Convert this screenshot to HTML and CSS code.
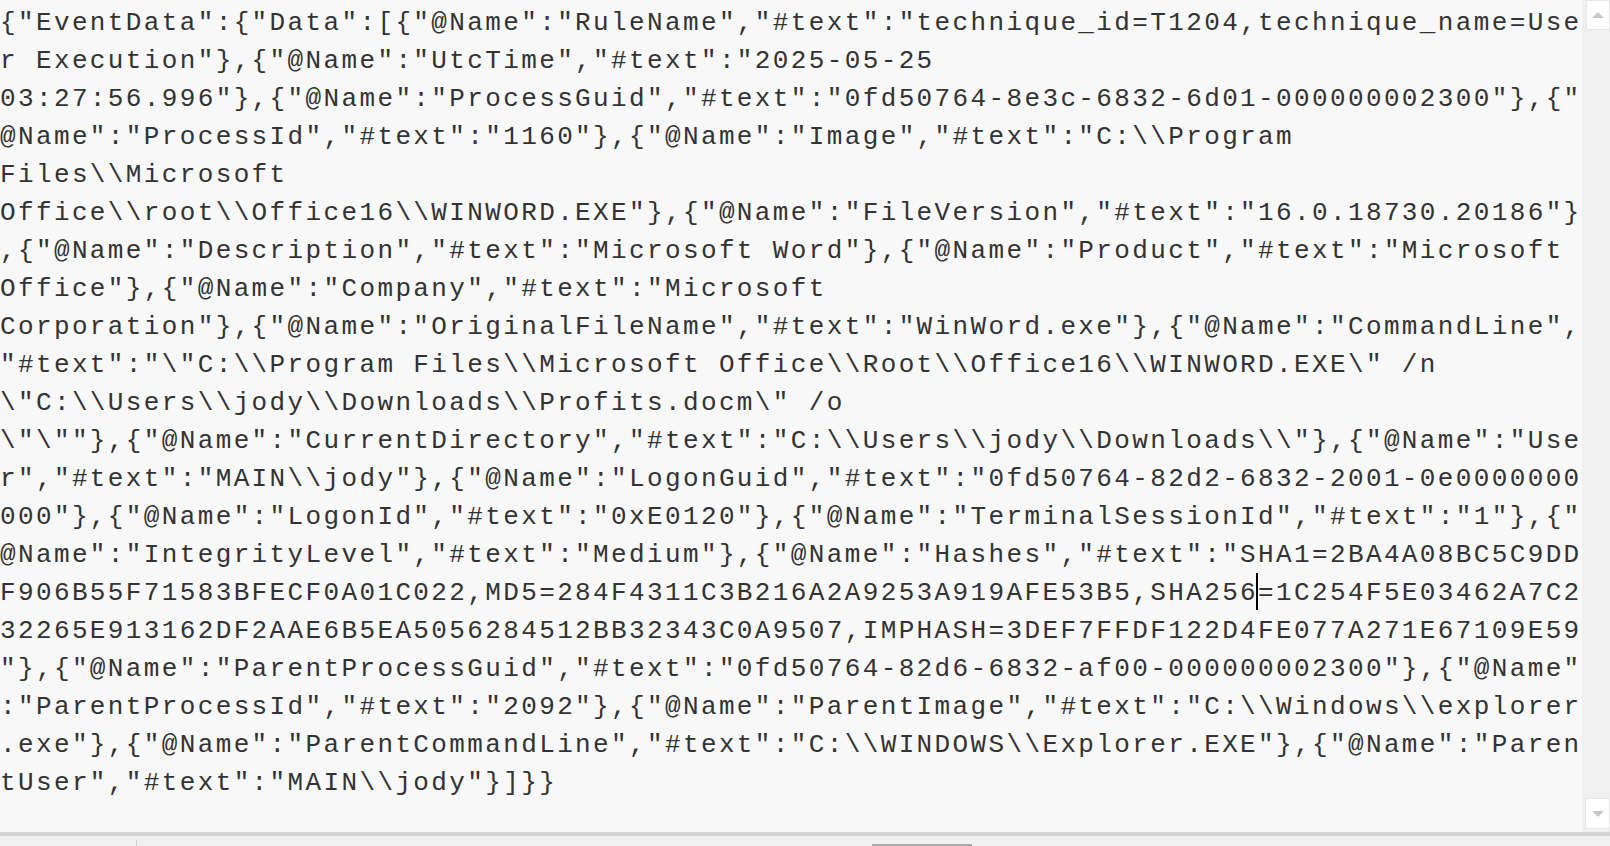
FILE: index.html
```
<!DOCTYPE html>
<html>
<head>
<meta charset="utf-8">
<link rel="stylesheet" href="styles.css">
</head>
<body>
<div class="window">
  <div class="main">
    <div class="editor">
      <div class="line">{"EventData":{"Data":[{"@Name":"RuleName","#text":"technique_id=T1204,technique_name=Use</div>
      <div class="line">r Execution"},{"@Name":"UtcTime","#text":"2025-05-25</div>
      <div class="line">03:27:56.996"},{"@Name":"ProcessGuid","#text":"0fd50764-8e3c-6832-6d01-000000002300"},{"</div>
      <div class="line">@Name":"ProcessId","#text":"1160"},{"@Name":"Image","#text":"C:\\Program</div>
      <div class="line">Files\\Microsoft</div>
      <div class="line">Office\\root\\Office16\\WINWORD.EXE"},{"@Name":"FileVersion","#text":"16.0.18730.20186"}</div>
      <div class="line">,{"@Name":"Description","#text":"Microsoft Word"},{"@Name":"Product","#text":"Microsoft</div>
      <div class="line">Office"},{"@Name":"Company","#text":"Microsoft</div>
      <div class="line">Corporation"},{"@Name":"OriginalFileName","#text":"WinWord.exe"},{"@Name":"CommandLine",</div>
      <div class="line">"#text":"\"C:\\Program Files\\Microsoft Office\\Root\\Office16\\WINWORD.EXE\" /n</div>
      <div class="line">\"C:\\Users\\jody\\Downloads\\Profits.docm\" /o</div>
      <div class="line">\"\""},{"@Name":"CurrentDirectory","#text":"C:\\Users\\jody\\Downloads\\"},{"@Name":"Use</div>
      <div class="line">r","#text":"MAIN\\jody"},{"@Name":"LogonGuid","#text":"0fd50764-82d2-6832-2001-0e0000000</div>
      <div class="line">000"},{"@Name":"LogonId","#text":"0xE0120"},{"@Name":"TerminalSessionId","#text":"1"},{"</div>
      <div class="line">@Name":"IntegrityLevel","#text":"Medium"},{"@Name":"Hashes","#text":"SHA1=2BA4A08BC5C9DD</div>
      <div class="line">F906B55F71583BFECF0A01C022,MD5=284F4311C3B216A2A9253A919AFE53B5,SHA256<span class="caret"></span>=1C254F5E03462A7C2</div>
      <div class="line">32265E913162DF2AAE6B5EA5056284512BB32343C0A9507,IMPHASH=3DEF7FFDF122D4FE077A271E67109E59</div>
      <div class="line">"},{"@Name":"ParentProcessGuid","#text":"0fd50764-82d6-6832-af00-000000002300"},{"@Name"</div>
      <div class="line">:"ParentProcessId","#text":"2092"},{"@Name":"ParentImage","#text":"C:\\Windows\\explorer</div>
      <div class="line">.exe"},{"@Name":"ParentCommandLine","#text":"C:\\WINDOWS\\Explorer.EXE"},{"@Name":"Paren</div>
      <div class="line">tUser","#text":"MAIN\\jody"}]}}</div>
    </div>
    <div class="vscroll">
      <div class="sbtn"><span class="arrow up"></span></div>
      <div class="track"></div>
      <div class="sbtn"><span class="arrow down"></span></div>
    </div>
  </div>
  <div class="hsep"></div>
  <div class="status">
    <div class="cell first"></div>
    <div class="cell mid"><span class="thumb"></span></div>
  </div>
</div>
</body>
</html>
```

FILE: styles.css
```
html, body {
  margin: 0;
  padding: 0;
  width: 1610px;
  height: 846px;
  overflow: hidden;
  background: #f0f0f0;
}

.window {
  display: flex;
  flex-direction: column;
  width: 1610px;
  height: 846px;
}

.main {
  display: flex;
  height: 832px;
  flex: none;
}

.editor {
  flex: 1;
  background: #f8f8f8;
  padding-top: 4px;
  overflow: hidden;
  font-family: "Liberation Mono", monospace;
  font-size: 26px;
  letter-spacing: 2.37px;
  line-height: 38px;
  color: #333333;
}

.line {
  white-space: pre;
  height: 38px;
}

.caret {
  position: relative;
  display: inline-block;
  width: 0;
  height: 20px;
}

.caret::after {
  content: "";
  position: absolute;
  left: -2px;
  top: -7px;
  width: 2px;
  height: 37px;
  background: #000;
}

.vscroll {
  width: 28px;
  flex: none;
  background: #f0f0f0;
  display: flex;
  flex-direction: column;
  align-items: flex-end;
}

.sbtn {
  width: 24px;
  height: 30px;
  background: #ffffff;
  border: 1px solid #e6e6e6;
  box-sizing: border-box;
  display: flex;
  align-items: center;
  justify-content: center;
}

.vscroll .sbtn:last-child {
  margin-bottom: 3px;
  width: 25px;
  height: 31px;
}

.track {
  flex: 1;
}

.arrow {
  width: 0;
  height: 0;
  border-left: 6px solid transparent;
  border-right: 6px solid transparent;
}

.arrow.up {
  border-bottom: 6px solid #c6c6c6;
}

.arrow.down {
  border-top: 6px solid #c6c6c6;
}

.hsep {
  height: 4px;
  background: #d2d2d2;
  flex: none;
}

.status {
  flex: 1;
  display: flex;
  background: #f0f0f0;
}

.cell.first {
  width: 136px;
  border-right: 1px solid #d0d0d0;
  margin-top: 4px;
}

.cell.mid {
  position: relative;
  flex: 1;
}

.thumb {
  position: absolute;
  left: 735px;
  bottom: 0;
  width: 100px;
  height: 2px;
  background: #a8a8a8;
}
```
